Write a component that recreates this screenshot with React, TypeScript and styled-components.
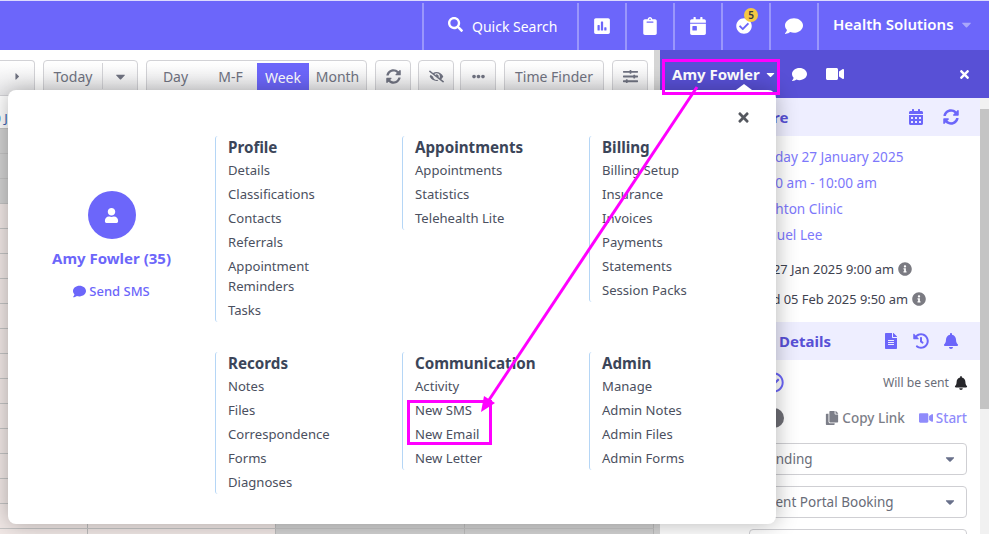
import * as React from 'react';
import styled, { createGlobalStyle } from 'styled-components';
import {
  FaBell,
  FaCalendarAlt,
  FaCalendarDay,
  FaCaretDown,
  FaCaretRight,
  FaCheckCircle,
  FaClipboard,
  FaComment,
  FaCopy,
  FaEllipsisH,
  FaEyeSlash,
  FaFileAlt,
  FaHistory,
  FaInfoCircle,
  FaPoll,
  FaRegCheckCircle,
  FaSearch,
  FaSlidersH,
  FaSyncAlt,
  FaTimes,
  FaUser,
  FaVideo,
} from 'react-icons/fa';

const PRIMARY = '#6c66fa';
const DARK_PRIMARY = '#5850d6';
const MAGENTA = '#ff00ff';

const GlobalStyle = createGlobalStyle`
  html, body {
    margin: 0;
    padding: 0;
    overflow: hidden;
    background: #fff;
  }
  * {
    box-sizing: border-box;
  }
`;

const Page = styled.div`
  position: relative;
  width: 989px;
  height: 534px;
  overflow: hidden;
  font-family: 'Noto Sans', 'Open Sans', sans-serif;
  font-size: 14px;
  color: #4b5060;
`;

const TopBar = styled.header`
  display: flex;
  justify-content: flex-end;
  height: 50px;
  padding-top: 2px;
  background: ${PRIMARY};
  border-top: 1px solid #dcdbfd;
  color: #fff;
`;

const SearchCell = styled.div`
  display: flex;
  align-items: center;
  gap: 9px;
  width: 155px;
  padding-left: 24px;
  border-left: 2px solid #9a96fb;
  font-size: 14px;
  white-space: nowrap;

  svg {
    font-size: 15px;
    margin-top: -5px;
  }
`;

const IconCell = styled.div<{ $small?: boolean; $shift?: number }>`
  position: relative;
  display: flex;
  align-items: center;
  justify-content: center;
  width: 48px;
  border-left: 2px solid #9a96fb;
  font-size: ${(p) => (p.$small ? 16 : 18)}px;
  padding-bottom: 1px;
  padding-right: ${(p) => p.$shift ?? 0}px;
`;

const Badge = styled.span`
  position: absolute;
  top: 5px;
  left: 21px;
  width: 14px;
  height: 14px;
  border-radius: 50%;
  background: #f5c842;
  color: #3a3a3a;
  font-size: 10px;
  font-weight: 600;
  line-height: 14px;
  text-align: center;
`;

const OrgCell = styled.div`
  display: flex;
  align-items: center;
  justify-content: space-between;
  width: 172px;
  padding: 0 15px 5px 14px;
  border-left: 2px solid #9a96fb;
  font-size: 15px;
  font-weight: 600;
  white-space: nowrap;

  svg {
    color: #aaa7fb;
    font-size: 15px;
  }
`;

const Main = styled.div`
  display: flex;
  height: 484px;
`;

const Calendar = styled.section`
  position: relative;
  width: 660px;
  flex-shrink: 0;
  border-right: 6px solid #d5d5d5;
  overflow: hidden;
`;

const Toolbar = styled.div`
  display: flex;
  gap: 8px;
  height: 38px;
  padding-top: 10px;
`;

const ToolGroup = styled.div<{ $width: number; $openLeft?: boolean; $pull?: number }>`
  display: flex;
  flex-shrink: 0;
  width: ${(p) => p.$width}px;
  height: 36px;
  margin-left: ${(p) => -(p.$pull ?? 0)}px;
  border: 1px solid #d2d2d6;
  border-left-width: ${(p) => (p.$openLeft ? 0 : 1)}px;
  border-radius: ${(p) => (p.$openLeft ? '0 4px 4px 0' : '4px')};
  background: linear-gradient(#fff, #e8e8ea);
  color: #6f7280;
  font-size: 14px;
`;

const ToolButton = styled.div<{ $active?: boolean; $divided?: boolean; $width?: number }>`
  display: flex;
  align-items: center;
  justify-content: center;
  flex: ${(p) => (p.$width ? `0 0 ${p.$width}px` : 1)};
  height: ${(p) => (p.$active ? '28px' : '26px')};
  margin-top: 2px;
  background: ${(p) => (p.$active ? PRIMARY : 'transparent')};
  color: ${(p) => (p.$active ? '#fff' : 'inherit')};
  border-right: ${(p) => (p.$divided ? '1px solid #d2d2d6' : 'none')};
`;

const DayHeader = styled.div`
  height: 40px;
  padding-top: 20px;
  margin-left: -14px;
  color: #3a62b0;
  font-size: 13px;
  line-height: 20px;
`;

const GridRow = styled.div`
  display: grid;
  grid-template-columns: 88px 188px 189px 1fr;
  height: 25px;
  border-top: 1px solid #c4c4c4;
`;

const GridCell = styled.div<{ $tone: 'gray' | 'pink' }>`
  background: ${(p) => (p.$tone === 'gray' ? '#d2d2d2' : '#f1e8e6')};
  border-right: 1px solid #bdbdbd;
`;

const SidePanel = styled.aside`
  display: flex;
  flex-direction: column;
  flex: 1;
  min-width: 0;
`;

const SideHeader = styled.div`
  display: flex;
  align-items: center;
  height: 48px;
  padding: 0 18px 0 12px;
  background: ${DARK_PRIMARY};
  color: #fff;
  font-size: 15px;
`;

const SideName = styled.span`
  font-size: 15px;
  font-weight: 700;
  margin-right: 4px;
  white-space: nowrap;
`;

const SideHeaderIcon = styled.span<{ $gap: number }>`
  display: flex;
  margin-left: ${(p) => p.$gap}px;
`;

const SideClose = styled.span`
  display: flex;
  margin-left: auto;
  font-size: 13px;
`;

const SideBody = styled.div`
  display: flex;
  flex: 1;
  min-height: 0;
`;

const SideContent = styled.div`
  width: 320px;
  overflow: hidden;
`;

const Scrollbar = styled.div`
  flex: 1;
  background: #f1f1f1;
  padding-top: 11px;
`;

const ScrollThumb = styled.div`
  height: 300px;
  background: #c4c4c4;
`;

const SectionHeader = styled.div<{ $indent: number }>`
  display: flex;
  align-items: center;
  height: 38px;
  padding-left: ${(p) => p.$indent}px;
  padding-right: 21px;
  background: #eeeeff;
  color: ${DARK_PRIMARY};
  font-size: 15px;
  font-weight: 700;
`;

const SectionTitle = styled.span`
  margin-right: auto;
`;

const SectionIcon = styled.span<{ $gap: number }>`
  display: flex;
  margin-left: ${(p) => p.$gap}px;
  color: ${PRIMARY};
  font-size: 16px;
`;

const InfoList = styled.div`
  padding: 8px 0 8px 59px;
`;

const InfoLine = styled.div<{ $indent: number }>`
  height: 26px;
  padding-left: ${(p) => p.$indent}px;
  line-height: 26px;
  color: #7d78fb;
  font-size: 13.6px;
  white-space: nowrap;
`;

const MetaLine = styled.div<{ $first?: boolean; $indent: number }>`
  display: flex;
  align-items: center;
  gap: 4px;
  height: 30px;
  padding-left: ${(p) => p.$indent}px;
  margin-top: ${(p) => (p.$first ? '6px' : 0)};
  color: #3f4350;
  font-size: 12.9px;
  white-space: nowrap;

  svg {
    color: #7b7b82;
    font-size: 14px;
  }
`;

const DetailsBody = styled.div`
  padding: 5px 13px 0 59px;
`;

const StatusRow = styled.div`
  display: flex;
  align-items: center;
  justify-content: flex-end;
  height: 35px;
  color: #6a6d78;
  font-size: 12.2px;
`;

const BellMark = styled.span`
  display: flex;
  margin-left: 5px;
  margin-right: -1px;
  color: #26262a;
  font-size: 14px;
`;

const StatusCircle = styled.span`
  display: flex;
  margin-right: auto;
  margin-left: 44px;
  font-size: 21px;
  color: ${PRIMARY};
`;

const GrayDot = styled.span`
  width: 20px;
  height: 20px;
  border-radius: 50%;
  background: #6f6f76;
  margin-left: 45px;
  margin-right: auto;
`;

const LinkAction = styled.span<{ $accent?: boolean }>`
  display: flex;
  align-items: center;
  gap: 3px;
  margin-left: ${(p) => (p.$accent ? '14px' : 0)};
  color: ${(p) => (p.$accent ? '#8f8bfb' : '#7c7e88')};
  font-size: 13.5px;
  font-weight: 500;

  svg {
    font-size: 14px;
  }
`;

const SelectStack = styled.div`
  margin-top: 8px;
  margin-left: 30px;
`;

const SelectBox = styled.div`
  display: flex;
  align-items: center;
  justify-content: space-between;
  height: 32px;
  margin-bottom: 11px;
  padding: 0 9px 0 10px;
  border: 1px solid #cfcfd3;
  border-radius: 4px;
  color: #696c78;
  font-size: 13.5px;

  svg {
    color: #68708a;
    font-size: 14px;
  }
`;

const Modal = styled.div`
  position: absolute;
  left: 8px;
  top: 90px;
  width: 768px;
  height: 434px;
  padding-top: 46px;
  background: #fff;
  border-radius: 8px;
  box-shadow: 0 0 22px rgba(0, 0, 0, 0.3);

  &::before {
    content: '';
    position: absolute;
    top: -6px;
    left: 728px;
    border-left: 8px solid transparent;
    border-right: 8px solid transparent;
    border-bottom: 6px solid #fff;
  }
`;

const ModalClose = styled.span`
  position: absolute;
  top: 20px;
  right: 25px;
  display: flex;
  color: #55585f;
  font-size: 15px;
`;

const MenuGrid = styled.div`
  display: grid;
  grid-template-columns: 207px repeat(3, 187px);
  grid-template-rows: 186px 142px;
  row-gap: 30px;
`;

const Profile = styled.div`
  display: flex;
  flex-direction: column;
  align-items: center;
  padding-top: 55px;
`;

const Avatar = styled.div`
  display: flex;
  align-items: center;
  justify-content: center;
  width: 48px;
  height: 48px;
  border-radius: 50%;
  background: ${PRIMARY};
  color: #fff;
  font-size: 15px;
`;

const ProfileName = styled.div`
  margin-top: 8px;
  color: ${PRIMARY};
  font-size: 15px;
  font-weight: 700;
  line-height: 22px;
`;

const SmsLink = styled.div`
  display: flex;
  align-items: center;
  gap: 3px;
  margin-top: 13px;
  color: ${PRIMARY};
  font-size: 13px;
  font-weight: 500;

  svg {
    font-size: 13px;
  }
`;

const MenuColumn = styled.div`
  align-self: start;
  padding-left: 12px;
  border-left: 1px solid #b5d6f6;
  border-radius: 3px;
`;

const MenuTitle = styled.div`
  height: 22px;
  color: #3b4559;
  font-size: 15.2px;
  font-weight: 700;
  line-height: 22px;
`;

const MenuLink = styled.div`
  max-width: 130px;
  padding: 2px 0;
  color: #4b5060;
  font-size: 13.1px;
  line-height: 20px;
`;

const Annotations = styled.svg`
  position: absolute;
  inset: 0;
  pointer-events: none;
`;

const menuSections = [
  { title: 'Profile', links: ['Details', 'Classifications', 'Contacts', 'Referrals', 'Appointment Reminders', 'Tasks'] },
  { title: 'Appointments', links: ['Appointments', 'Statistics', 'Telehealth Lite'] },
  { title: 'Billing', links: ['Billing Setup', 'Insurance', 'Invoices', 'Payments', 'Statements', 'Session Packs'] },
  { title: 'Records', links: ['Notes', 'Files', 'Correspondence', 'Forms', 'Diagnoses'] },
  { title: 'Communication', links: ['Activity', 'New SMS', 'New Email', 'New Letter'] },
  { title: 'Admin', links: ['Manage', 'Admin Notes', 'Admin Files', 'Admin Forms'] },
];

function MenuSection(props: { title: string; links: string[] }) {
  return (
    <MenuColumn>
      <MenuTitle>{props.title}</MenuTitle>
      {props.links.map((link) => (
        <MenuLink key={link}>{link}</MenuLink>
      ))}
    </MenuColumn>
  );
}

function CalendarGrid() {
  const rows = Array.from({ length: 17 }, (_, i) => i);
  return (
    <>
      {rows.map((row) => (
        <GridRow key={row}>
          <GridCell $tone={row < 3 ? 'gray' : 'pink'} />
          <GridCell $tone={row < 3 ? 'gray' : 'pink'} />
          <GridCell $tone="gray" />
          <GridCell $tone="gray" />
        </GridRow>
      ))}
    </>
  );
}

export default function App() {
  return (
    <Page>
      <GlobalStyle />
      <TopBar>
        <SearchCell>
          <FaSearch />
          Quick Search
        </SearchCell>
        <IconCell><FaPoll /></IconCell>
        <IconCell><FaClipboard /></IconCell>
        <IconCell><FaCalendarDay /></IconCell>
        <IconCell $small $shift={4}>
          <FaCheckCircle />
          <Badge>5</Badge>
        </IconCell>
        <IconCell><FaComment /></IconCell>
        <OrgCell>
          Health Solutions
          <FaCaretDown />
        </OrgCell>
      </TopBar>

      <Main>
        <Calendar>
          <Toolbar>
            <ToolGroup $width={35} $openLeft>
              <ToolButton><FaCaretRight size={11} /></ToolButton>
            </ToolGroup>
            <ToolGroup $width={95}>
              <ToolButton $divided $width={59}>Today</ToolButton>
              <ToolButton><FaCaretDown size={15} /></ToolButton>
            </ToolGroup>
            <ToolGroup $width={221}>
              <ToolButton $width={57}>Day</ToolButton>
              <ToolButton $width={53}>M-F</ToolButton>
              <ToolButton $active $width={52}>Week</ToolButton>
              <ToolButton>Month</ToolButton>
            </ToolGroup>
            <ToolGroup $width={36}>
              <ToolButton><FaSyncAlt size={15} /></ToolButton>
            </ToolGroup>
            <ToolGroup $width={36} $pull={1}>
              <ToolButton><FaEyeSlash size={15} /></ToolButton>
            </ToolGroup>
            <ToolGroup $width={36} $pull={2}>
              <ToolButton><FaEllipsisH size={13} /></ToolButton>
            </ToolGroup>
            <ToolGroup $width={100}>
              <ToolButton>Time Finder</ToolButton>
            </ToolGroup>
            <ToolGroup $width={36}>
              <ToolButton><FaSlidersH size={15} /></ToolButton>
            </ToolGroup>
          </Toolbar>
          <DayHeader>20 Jan</DayHeader>
          <CalendarGrid />
        </Calendar>

        <SidePanel>
          <SideHeader>
            <SideName>Amy Fowler</SideName>
            <FaCaretDown size={13} />
            <SideHeaderIcon $gap={15}><FaComment /></SideHeaderIcon>
            <SideHeaderIcon $gap={19}><FaVideo size={18} /></SideHeaderIcon>
            <SideClose><FaTimes /></SideClose>
          </SideHeader>
          <SideBody>
            <SideContent>
              <SectionHeader $indent={86}>
                <SectionTitle>Share</SectionTitle>
                <SectionIcon $gap={0}><FaCalendarAlt /></SectionIcon>
                <SectionIcon $gap={19}><FaSyncAlt /></SectionIcon>
              </SectionHeader>
              <InfoList>
                <InfoLine $indent={27}>Monday 27 January 2025</InfoLine>
                <InfoLine $indent={37}>9:00 am - 10:00 am</InfoLine>
                <InfoLine $indent={30}>Brighton Clinic</InfoLine>
                <InfoLine $indent={30}>Samuel Lee</InfoLine>
                <MetaLine $first $indent={3}>Created 27 Jan 2025 9:00 am <FaInfoCircle /></MetaLine>
                <MetaLine $indent={9}>Updated 05 Feb 2025 9:50 am <FaInfoCircle /></MetaLine>
              </InfoList>
              <SectionHeader $indent={119}>
                <SectionTitle>Details</SectionTitle>
                <SectionIcon $gap={0}><FaFileAlt /></SectionIcon>
                <SectionIcon $gap={14}><FaHistory /></SectionIcon>
                <SectionIcon $gap={14}><FaBell /></SectionIcon>
              </SectionHeader>
              <DetailsBody>
                <StatusRow>
                  <StatusCircle><FaRegCheckCircle /></StatusCircle>
                  Will be sent
                  <BellMark><FaBell /></BellMark>
                </StatusRow>
                <StatusRow>
                  <GrayDot />
                  <LinkAction><FaCopy />Copy Link</LinkAction>
                  <LinkAction $accent><FaVideo />Start</LinkAction>
                </StatusRow>
                <SelectStack>
                  <SelectBox>
                    Pending
                    <FaCaretDown />
                  </SelectBox>
                  <SelectBox>
                    Client Portal Booking
                    <FaCaretDown />
                  </SelectBox>
                  <SelectBox />
                </SelectStack>
              </DetailsBody>
            </SideContent>
            <Scrollbar>
              <ScrollThumb />
            </Scrollbar>
          </SideBody>
        </SidePanel>
      </Main>

      <Modal>
        <ModalClose><FaTimes /></ModalClose>
        <MenuGrid>
          <Profile>
            <Avatar><FaUser /></Avatar>
            <ProfileName>Amy Fowler (35)</ProfileName>
            <SmsLink><FaComment />Send SMS</SmsLink>
          </Profile>
          <MenuSection {...menuSections[0]} />
          <MenuSection {...menuSections[1]} />
          <MenuSection {...menuSections[2]} />
          <div />
          <MenuSection {...menuSections[3]} />
          <MenuSection {...menuSections[4]} />
          <MenuSection {...menuSections[5]} />
        </MenuGrid>
      </Modal>

      <Annotations width="989" height="534" viewBox="0 0 989 534">
        <rect x="663.5" y="60.5" width="115" height="33" fill="none" stroke={MAGENTA} strokeWidth="3" />
        <rect x="408.5" y="401.5" width="82" height="42" fill="none" stroke={MAGENTA} strokeWidth="3" />
        <line x1="697" y1="87" x2="485" y2="406" stroke={MAGENTA} strokeWidth="3" />
        <polygon points="481,412 484,396 495,403" fill={MAGENTA} />
      </Annotations>
    </Page>
  );
}
